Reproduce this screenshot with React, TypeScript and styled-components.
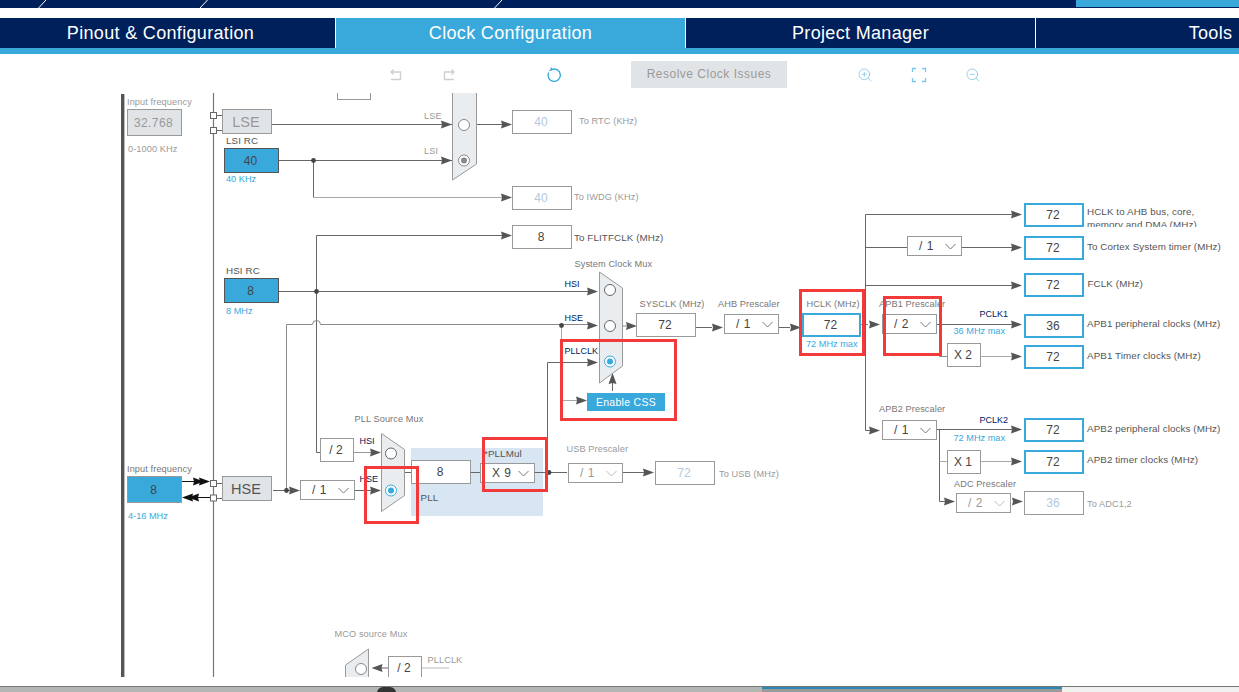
import React from "react";
import styled, { createGlobalStyle, css } from "styled-components";
import { ZoomIn, ZoomOut } from "lucide-react";

const NAVY = "#00205c";
const BLUE = "#39a9dc";
const SKY = "#7cc4ea";
const CANVAS_TOP = 93;

type Tone = "source" | "gate" | "plain" | "off" | "out" | "inputOff" | "inputOn";
type LabelTone = "muted" | "dark" | "navy" | "blue" | "soft";

const GlobalStyle = createGlobalStyle`
  html, body {
    margin: 0;
    height: 100%;
    background: #fff;
    overflow: hidden;
  }
  body {
    font-family: "Liberation Sans", Arial, sans-serif;
  }
`;

const Page = styled.div`
  width: 1239px;
  height: 692px;
  display: flex;
  flex-direction: column;
  overflow: hidden;
`;

const TopBar = styled.div`
  position: relative;
  flex: 0 0 8px;
  background: ${NAVY};
`;

const TopAccent = styled.div`
  position: absolute;
  right: 0;
  top: 0;
  width: 163px;
  height: 7px;
  background: ${BLUE};
`;

const TopSlashes = styled.svg`
  position: absolute;
  left: 0;
  top: 0;
`;

const Tabs = styled.nav`
  display: flex;
  flex: 0 0 36px;
  margin-top: 10px;
  margin-left: -14px;
  border-bottom: 6px solid ${BLUE};
  box-sizing: border-box;
`;

const Tab = styled.div<{ $active?: boolean }>`
  flex: 0 0 349px;
  margin-right: 1px;
  height: 30px;
  line-height: 31px;
  text-align: center;
  color: #fff;
  font-size: 18px;
  letter-spacing: 0.33px;
  background: ${(p) => (p.$active ? BLUE : NAVY)};
`;

const Toolbar = styled.div`
  flex: 0 0 39px;
  display: flex;
  align-items: center;
  padding: 2px 0 0 388px;
  box-sizing: border-box;
`;

const ToolIcon = styled.span<{ $gap: number; $color?: string }>`
  display: flex;
  width: 16px;
  height: 16px;
  margin-right: ${(p) => p.$gap}px;
  color: ${(p) => p.$color ?? "#cfcfcf"};
`;

const ResolveButton = styled.div`
  width: 156px;
  height: 27px;
  line-height: 27px;
  text-align: center;
  background: #e1e4e7;
  color: #9a9a9a;
  font-size: 12px;
  letter-spacing: 0.5px;
  margin-right: 70px;
`;

const Canvas = styled.main`
  position: relative;
  flex: 0 0 584px;
  overflow: hidden;
`;

const Wires = styled.svg`
  position: absolute;
  left: 0;
  top: 0;
`;

const placed = css<{ $x: number; $y: number; $w: number; $h: number }>`
  position: absolute;
  box-sizing: border-box;
  left: ${(p) => p.$x}px;
  top: ${(p) => p.$y - CANVAS_TOP}px;
  width: ${(p) => p.$w}px;
  height: ${(p) => p.$h}px;
`;

const PllPanel = styled.div<{ $x: number; $y: number; $w: number; $h: number }>`
  ${placed}
  background: #d8e6f3;
`;

const toneStyles: Record<Tone, ReturnType<typeof css>> = {
  source: css`
    background: ${BLUE};
    border: 1px solid #555;
    color: #444;
  `,
  gate: css`
    background: #e1e4e7;
    border: 1px solid #999;
    color: #555;
    font-size: 14.5px;
  `,
  plain: css`
    background: #fff;
    border: 1px solid #999;
    color: #444;
  `,
  off: css`
    background: #fff;
    border: 1px solid #999;
    color: #b3c9de;
  `,
  out: css`
    background: #fff;
    border: 2px solid ${BLUE};
    color: #444;
  `,
  inputOff: css`
    background: #e1e4e7;
    border: 1px solid #999;
    color: #999;
    letter-spacing: 0.4px;
  `,
  inputOn: css`
    background: ${BLUE};
    border: 1px solid #999;
    color: #444;
  `,
};

const Box = styled.div<{ $x: number; $y: number; $w: number; $h: number; $tone: Tone; $dim?: boolean }>`
  ${placed}
  display: flex;
  align-items: center;
  justify-content: center;
  padding-right: 2px;
  font-size: 12px;
  ${(p) => toneStyles[p.$tone]}
  ${(p) => p.$dim && "color: #999;"}
`;

const Select = styled.div<{ $x: number; $y: number; $off?: boolean }>`
  position: absolute;
  box-sizing: border-box;
  left: ${(p) => p.$x}px;
  top: ${(p) => p.$y - CANVAS_TOP}px;
  width: 55px;
  height: 20px;
  display: flex;
  align-items: center;
  justify-content: space-between;
  padding: 0 5px 0 11px;
  background: #fff;
  border: 1px solid #999;
  font-size: 12px;
  letter-spacing: 0.5px;
  color: ${(p) => (p.$off ? "#999" : "#444")};
`;

const Chevron = styled.svg<{ $off?: boolean }>`
  width: 11px;
  height: 7px;
  stroke: ${(p) => (p.$off ? "#bbb" : "#777")};
  stroke-width: 1;
  fill: none;
`;

const labelColors: Record<LabelTone, string> = {
  muted: "#9a9a9a",
  dark: "#555",
  navy: NAVY,
  blue: BLUE,
  soft: "#777",
};

const labelSizes: Record<LabelTone, string> = {
  muted: "font-size: 9.2px; letter-spacing: 0.1px;",
  dark: "font-size: 9.8px; letter-spacing: 0.1px;",
  navy: "font-size: 9px; letter-spacing: 0;",
  blue: "font-size: 9.2px; letter-spacing: 0;",
  soft: "font-size: 9.2px; letter-spacing: 0.1px;",
};

const Label = styled.span<{ $x: number; $y: number; $tone: LabelTone }>`
  position: absolute;
  left: ${(p) => p.$x}px;
  top: ${(p) => p.$y - CANVAS_TOP - 6}px;
  line-height: 12px;
  white-space: nowrap;
  color: ${(p) => labelColors[p.$tone]};
  ${(p) => labelSizes[p.$tone]}
`;

const ClippedNote = styled.span<{ $x: number; $y: number }>`
  position: absolute;
  left: ${(p) => p.$x}px;
  top: ${(p) => p.$y - CANVAS_TOP}px;
  width: 150px;
  height: 22px;
  overflow: hidden;
  font-size: 9.8px;
  line-height: 13px;
  letter-spacing: 0.1px;
  color: #555;
`;

const CssButton = styled.div<{ $x: number; $y: number; $w: number; $h: number }>`
  ${placed}
  background: ${BLUE};
  color: #fff;
  font-size: 10.5px;
  letter-spacing: 0.3px;
  display: flex;
  align-items: center;
  justify-content: center;
`;

const RedMark = styled.div<{ $x: number; $y: number; $w: number; $h: number }>`
  ${placed}
  border: 3px solid #f33a3a;
`;

const Taskbar = styled.footer`
  position: relative;
  margin-top: 9px;
  flex: 0 0 6px;
  display: flex;
  background: #b4b6b6;
  border-top: 1px solid #777;
  box-sizing: border-box;
`;

const TaskGap = styled.div<{ $w: number; $bg: string }>`
  flex: 0 0 ${(p) => p.$w}px;
  background: ${(p) => p.$bg};
`;

const TaskActive = styled.div`
  flex: 0 0 300px;
  background: #9a9c9c;
  border-top: 2px solid #2e88b5;
  box-sizing: border-box;
`;

const TaskIcon = styled.div`
  position: absolute;
  left: 377px;
  top: 0;
  width: 19px;
  height: 6px;
  background: #333;
  border-radius: 6px 6px 0 0;
`;

const Arrow = ({ x, y, dir = 0, fill = "#555" }: { x: number; y: number; dir?: number; fill?: string }) => (
  <polygon
    points={`${x},${y} ${x - 11},${y - 4} ${x - 10},${y} ${x - 11},${y + 4}`}
    fill={fill}
    transform={`rotate(${dir} ${x} ${y})`}
  />
);

const Radio = ({ x, y, on, dot, dim }: { x: number; y: number; on?: boolean; dot?: boolean; dim?: boolean }) => (
  <g>
    <circle cx={x} cy={y} r={5.5} fill="#fff" stroke={on ? BLUE : dim ? "#888" : "#666"} strokeWidth={1} />
    {on && <circle cx={x} cy={y} r={3} fill={BLUE} />}
    {dot && <circle cx={x} cy={y} r={3} fill="#888" />}
  </g>
);

type Wire = { d: string; c?: string };

const wires: Wire[] = [
  // top left: LSE, LSI
  { d: "M272 124.5H452" },
  { d: "M279 160.5H452" },
  { d: "M313.5 160.5V197.5" },
  { d: "M313.5 197.5H503", c: "#aaa" },
  { d: "M476 124.5H503" },
  { d: "M316.5 235.5H505" },
  { d: "M316.5 235.5V452.5H320" },
  // HSI and HSE into the system clock mux
  { d: "M279 291.5H590" },
  { d: "M286.5 490.5V324.5H312.5a4 4 0 0 1 8 0H590", c: "#8a8a8a" },
  { d: "M561.5 325.5V400.5H578", c: "#aaa" },
  { d: "M547.5 362.5H590" },
  { d: "M547.5 362.5V472" },
  { d: "M612.5 380V391" },
  { d: "M622 326H630", c: "#888" },
  // system clock path
  { d: "M696 327.5H712" },
  { d: "M779 327.5H790" },
  { d: "M861 324.5H868", c: "#888" },
  // bus tree
  { d: "M865.5 214.5V430.5H870" },
  { d: "M865.5 214.5H1012" },
  { d: "M865.5 247.5H907" },
  { d: "M962 247.5H1012" },
  { d: "M865.5 285.5H1012" },
  { d: "M937 324.5H1012" },
  { d: "M939.5 324.5V356.5H947", c: "#888" },
  { d: "M981 356.5H1012", c: "#aaa" },
  { d: "M937 429.5H1012" },
  { d: "M939.5 429.5V501.5H945" },
  { d: "M939.5 461.5H947", c: "#aaa" },
  { d: "M981 461.5H1012", c: "#aaa" },
  // HSE / PLL
  { d: "M182 481.5H200", c: "#111" },
  { d: "M192 497.5H210", c: "#111" },
  { d: "M217 115.5H222" },
  { d: "M217 130.5H222" },
  { d: "M217 483.5H222" },
  { d: "M217 498.5H222" },
  { d: "M273 490.5H292" },
  { d: "M355 490.5H372" },
  { d: "M354 452.5H372", c: "#999" },
  { d: "M404 472.5H411" },
  { d: "M471 472.5H481" },
  { d: "M535 472.5H567" },
  { d: "M623 472.5H645" },
  // MCO
  { d: "M388 668H378" },
  { d: "M422 668H449", c: "#bbb" },
];

const arrows = [
  [452, 124.5], [452, 160.5], [512, 124.5], [512, 197.5], [512, 235.5],
  [598, 291.5], [598, 325.5], [598, 362.5], [587, 400.5], [637, 326],
  [723, 327.5], [801, 327.5], [880, 324.5], [880, 430.5], [1022, 214.5],
  [1022, 247.5], [1022, 285.5], [1022, 324.5], [1022, 356.5], [1022, 429.5],
  [1022, 461.5], [955, 501.5], [1023, 501.5], [300, 490.5], [381, 490.5],
  [381, 452.5], [654, 472.5],
];

const dots = [
  [313.5, 160.5], [316.5, 291.5], [561.5, 325.5], [286.5, 490.5], [549, 472.5],
];

const pins = [115.5, 130.5, 483.5, 498];

const muxes = [
  "452.5,90 476.5,90 476.5,164 452.5,180",
  "599.5,272 622.5,288 622.5,366 599.5,383",
  "381.5,433.5 404.5,449.5 404.5,495.5 381.5,511.5",
  "345.5,665 368.5,649 368.5,690 345.5,690",
];

const radios = [
  { x: 464, y: 125, dim: true },
  { x: 464, y: 160.5, dim: true, dot: true },
  { x: 610, y: 290 },
  { x: 610, y: 326 },
  { x: 610, y: 361.5, on: true },
  { x: 391, y: 453.5 },
  { x: 391, y: 490.5, on: true },
  { x: 361, y: 669, dim: true },
];

const boxes: { x: number; y: number; w: number; h: number; tone: Tone; text?: string; dim?: boolean }[] = [
  { x: 337, y: 75, w: 34, h: 25, tone: "plain" },
  { x: 127, y: 109, w: 55, h: 27, tone: "inputOff", text: "32.768" },
  { x: 222, y: 109, w: 50, h: 25, tone: "gate", text: "LSE", dim: true },
  { x: 224, y: 148, w: 55, h: 25, tone: "source", text: "40" },
  { x: 224, y: 278, w: 55, h: 25, tone: "source", text: "8" },
  { x: 127, y: 476, w: 55, h: 27, tone: "inputOn", text: "8" },
  { x: 222, y: 476, w: 50, h: 25, tone: "gate", text: "HSE" },
  { x: 512, y: 110, w: 60, h: 24, tone: "off", text: "40" },
  { x: 512, y: 186, w: 60, h: 24, tone: "off", text: "40" },
  { x: 512, y: 225, w: 60, h: 24, tone: "plain", text: "8" },
  { x: 636, y: 313, w: 60, h: 24, tone: "plain", text: "72" },
  { x: 802, y: 313, w: 59, h: 24, tone: "out", text: "72" },
  { x: 1024, y: 203, w: 60, h: 24, tone: "out", text: "72" },
  { x: 1024, y: 236, w: 60, h: 24, tone: "out", text: "72" },
  { x: 1024, y: 273, w: 60, h: 24, tone: "out", text: "72" },
  { x: 1024, y: 314, w: 60, h: 24, tone: "out", text: "36" },
  { x: 1024, y: 345, w: 60, h: 24, tone: "out", text: "72" },
  { x: 1024, y: 418, w: 60, h: 24, tone: "out", text: "72" },
  { x: 1024, y: 450, w: 60, h: 24, tone: "out", text: "72" },
  { x: 1024, y: 491, w: 60, h: 24, tone: "off", text: "36" },
  { x: 947, y: 343, w: 34, h: 24, tone: "plain", text: "X 2" },
  { x: 947, y: 450, w: 34, h: 24, tone: "plain", text: "X 1" },
  { x: 320, y: 438, w: 34, h: 24, tone: "plain", text: "/ 2" },
  { x: 411, y: 460, w: 60, h: 24, tone: "plain", text: "8" },
  { x: 655, y: 461, w: 60, h: 24, tone: "off", text: "72" },
  { x: 388, y: 656, w: 34, h: 24, tone: "plain", text: "/ 2" },
];

const selects: { x: number; y: number; text: string; off?: boolean }[] = [
  { x: 724, y: 314, text: "/ 1" },
  { x: 907, y: 236, text: "/ 1" },
  { x: 882, y: 314, text: "/ 2" },
  { x: 882, y: 420, text: "/ 1" },
  { x: 956, y: 493, text: "/ 2", off: true },
  { x: 300, y: 480, text: "/ 1" },
  { x: 480, y: 463, text: "X 9" },
  { x: 568, y: 463, text: "/ 1", off: true },
];

const labels: { x: number; y: number; text: string; tone: LabelTone }[] = [
  { x: 127, y: 102, text: "Input frequency", tone: "muted" },
  { x: 128, y: 148.5, text: "0-1000 KHz", tone: "muted" },
  { x: 226, y: 140.5, text: "LSI RC", tone: "dark" },
  { x: 226, y: 178.5, text: "40 KHz", tone: "blue" },
  { x: 226, y: 270.5, text: "HSI RC", tone: "dark" },
  { x: 226, y: 310.5, text: "8 MHz", tone: "blue" },
  { x: 424, y: 115.5, text: "LSE", tone: "muted" },
  { x: 424, y: 150.5, text: "LSI", tone: "muted" },
  { x: 579, y: 120.5, text: "To RTC (KHz)", tone: "muted" },
  { x: 574, y: 197, text: "To IWDG (KHz)", tone: "muted" },
  { x: 574, y: 237.5, text: "To FLITFCLK (MHz)", tone: "dark" },
  { x: 574.5, y: 264, text: "System Clock Mux", tone: "soft" },
  { x: 564.5, y: 283.5, text: "HSI", tone: "navy" },
  { x: 564.5, y: 317.5, text: "HSE", tone: "navy" },
  { x: 564.5, y: 350.5, text: "PLLCLK", tone: "navy" },
  { x: 639.5, y: 303.5, text: "SYSCLK (MHz)", tone: "soft" },
  { x: 718, y: 303.5, text: "AHB Prescaler", tone: "soft" },
  { x: 806.5, y: 303.5, text: "HCLK (MHz)", tone: "soft" },
  { x: 806, y: 343.5, text: "72 MHz max", tone: "blue" },
  { x: 879, y: 303.5, text: "APB1 Prescaler", tone: "soft" },
  { x: 979.5, y: 313.5, text: "PCLK1", tone: "navy" },
  { x: 953.5, y: 330.5, text: "36 MHz max", tone: "blue" },
  { x: 1087, y: 246.5, text: "To Cortex System timer (MHz)", tone: "dark" },
  { x: 1087.5, y: 283.5, text: "FCLK (MHz)", tone: "dark" },
  { x: 1087, y: 323.5, text: "APB1 peripheral clocks (MHz)", tone: "dark" },
  { x: 1087, y: 355.5, text: "APB1 Timer clocks (MHz)", tone: "dark" },
  { x: 879, y: 408.5, text: "APB2 Prescaler", tone: "soft" },
  { x: 979.5, y: 419.5, text: "PCLK2", tone: "navy" },
  { x: 953.5, y: 437.5, text: "72 MHz max", tone: "blue" },
  { x: 1087, y: 428.5, text: "APB2 peripheral clocks (MHz)", tone: "dark" },
  { x: 1087, y: 459.5, text: "APB2 timer clocks (MHz)", tone: "dark" },
  { x: 954, y: 483.5, text: "ADC Prescaler", tone: "soft" },
  { x: 1087, y: 503.5, text: "To ADC1,2", tone: "muted" },
  { x: 127, y: 469, text: "Input frequency", tone: "soft" },
  { x: 128, y: 515.5, text: "4-16 MHz", tone: "blue" },
  { x: 354.5, y: 418.5, text: "PLL Source Mux", tone: "soft" },
  { x: 359.5, y: 440.5, text: "HSI", tone: "navy" },
  { x: 359.5, y: 478.5, text: "HSE", tone: "navy" },
  { x: 484, y: 453.5, text: "*PLLMul", tone: "dark" },
  { x: 420.5, y: 497.5, text: "PLL", tone: "dark" },
  { x: 566.5, y: 448.5, text: "USB Prescaler", tone: "muted" },
  { x: 719, y: 473.5, text: "To USB (MHz)", tone: "muted" },
  { x: 334.5, y: 633.5, text: "MCO source Mux", tone: "muted" },
  { x: 427.5, y: 659.5, text: "PLLCLK", tone: "muted" },
];

const redMarks = [
  { x: 364, y: 466, w: 55, h: 58 },
  { x: 482, y: 437, w: 66, h: 55 },
  { x: 560, y: 339, w: 117, h: 82 },
  { x: 799, y: 289, w: 66, h: 67 },
  { x: 883, y: 296, w: 59, h: 60 },
];

const App: React.FC = () => {
  return (
    <Page>
      <GlobalStyle />
      <TopBar>
        <TopAccent />
        <TopSlashes width="600" height="8">
          <path d="M38.5 8L46 0M200 8L207.5 0M494.5 8L502 0" stroke="#fff" strokeWidth="1" />
        </TopSlashes>
      </TopBar>
      <Tabs>
        <Tab>Pinout &amp; Configuration</Tab>
        <Tab $active>Clock Configuration</Tab>
        <Tab>Project Manager</Tab>
        <Tab>Tools</Tab>
      </Tabs>
      <Toolbar>
        <ToolIcon $gap={37}>
          <svg width="16" height="16" viewBox="0 0 16 16" fill="none" stroke="currentColor" strokeWidth="1.4">
            <path d="M3 5h9.5v7.5H3M5.5 2.5L3 5l2.5 2.5" />
          </svg>
        </ToolIcon>
        <ToolIcon $gap={89}>
          <svg width="16" height="16" viewBox="0 0 16 16" fill="none" stroke="currentColor" strokeWidth="1.4">
            <path d="M13 5H3.5v7.5H13M10.5 2.5L13 5l-2.5 2.5" />
          </svg>
        </ToolIcon>
        <ToolIcon $gap={69} $color={BLUE}>
          <svg width="16" height="16" viewBox="0 0 16 16" fill="none" stroke="currentColor" strokeWidth="1.4">
            <path d="M5.5 2.6A6.2 6.2 0 1 1 2.6 5.5M5 0.8L5.8 2.8L3.4 3.6" />
          </svg>
        </ToolIcon>
        <ResolveButton>Resolve Clock Issues</ResolveButton>
        <ToolIcon $gap={38} $color={SKY}>
          <ZoomIn size={16} strokeWidth={1.2} />
        </ToolIcon>
        <ToolIcon $gap={38} $color={SKY}>
          <svg width="16" height="16" viewBox="0 0 16 16" fill="none" stroke="currentColor" strokeWidth="1.3">
            <path d="M1.5 5V1.5H5M11 1.5h3.5V5M14.5 11v3.5H11M5 14.5H1.5V11" />
          </svg>
        </ToolIcon>
        <ToolIcon $gap={0} $color={SKY}>
          <ZoomOut size={16} strokeWidth={1.2} />
        </ToolIcon>
      </Toolbar>
      <Canvas>
        <PllPanel $x={411} $y={448} $w={132} $h={68} />
        <Wires width="1239" height="584" viewBox={`0 ${CANVAS_TOP} 1239 584`}>
          <rect x="121" y={CANVAS_TOP + 1} width="3.4" height="590" fill="#555" />
          <path d="M213.5 93V677" stroke="#777" strokeWidth="1.2" />
          {wires.map((w, i) => (
            <path key={i} d={w.d} fill="none" stroke={w.c ?? "#666"} strokeWidth="1" />
          ))}
          {arrows.map(([x, y], i) => (
            <Arrow key={i} x={x} y={y} />
          ))}
          <Arrow x={612.5} y={373} dir={-90} />
          <Arrow x={371.5} y={668} dir={180} />
          <Arrow x={204} y={481.5} fill="#111" />
          <Arrow x={210} y={481.5} fill="#111" />
          <Arrow x={182} y={497.5} dir={180} fill="#111" />
          <Arrow x={188} y={497.5} dir={180} fill="#111" />
          {dots.map(([x, y], i) => (
            <circle key={i} cx={x} cy={y} r={2.4} fill="#444" />
          ))}
          {pins.map((y) => (
            <rect key={y} x="210.5" y={y - 3} width="6" height="6" fill="#fff" stroke="#666" />
          ))}
          {muxes.map((points) => (
            <polygon key={points} points={points} fill="#e9edf0" stroke="#999" />
          ))}
          {radios.map((r, i) => (
            <Radio key={i} {...r} />
          ))}
        </Wires>
        {boxes.map((b, i) => (
          <Box key={i} $x={b.x} $y={b.y} $w={b.w} $h={b.h} $tone={b.tone} $dim={b.dim}>
            {b.text}
          </Box>
        ))}
        {selects.map((s, i) => (
          <Select key={i} $x={s.x} $y={s.y} $off={s.off}>
            {s.text}
            <Chevron viewBox="0 0 11 7" $off={s.off}>
              <path d="M0.5 1L5.5 6L10.5 1" />
            </Chevron>
          </Select>
        ))}
        {labels.map((l) => (
          <Label key={`${l.text}${l.x}${l.y}`} $x={l.x} $y={l.y} $tone={l.tone}>
            {l.text}
          </Label>
        ))}
        <ClippedNote $x={1087} $y={205}>
          HCLK to AHB bus, core,
          <br />
          memory and DMA (MHz)
        </ClippedNote>
        <CssButton $x={587} $y={393} $w={78} $h={18}>
          Enable CSS
        </CssButton>
        {redMarks.map((m) => (
          <RedMark key={m.x} $x={m.x} $y={m.y} $w={m.w} $h={m.h} />
        ))}
      </Canvas>
      <Taskbar>
        <TaskGap $w={762} $bg="#b4b6b6" />
        <TaskActive />
        <TaskGap $w={177} $bg="#f0f0f0" />
        <TaskIcon />
      </Taskbar>
    </Page>
  );
};

export default App;
